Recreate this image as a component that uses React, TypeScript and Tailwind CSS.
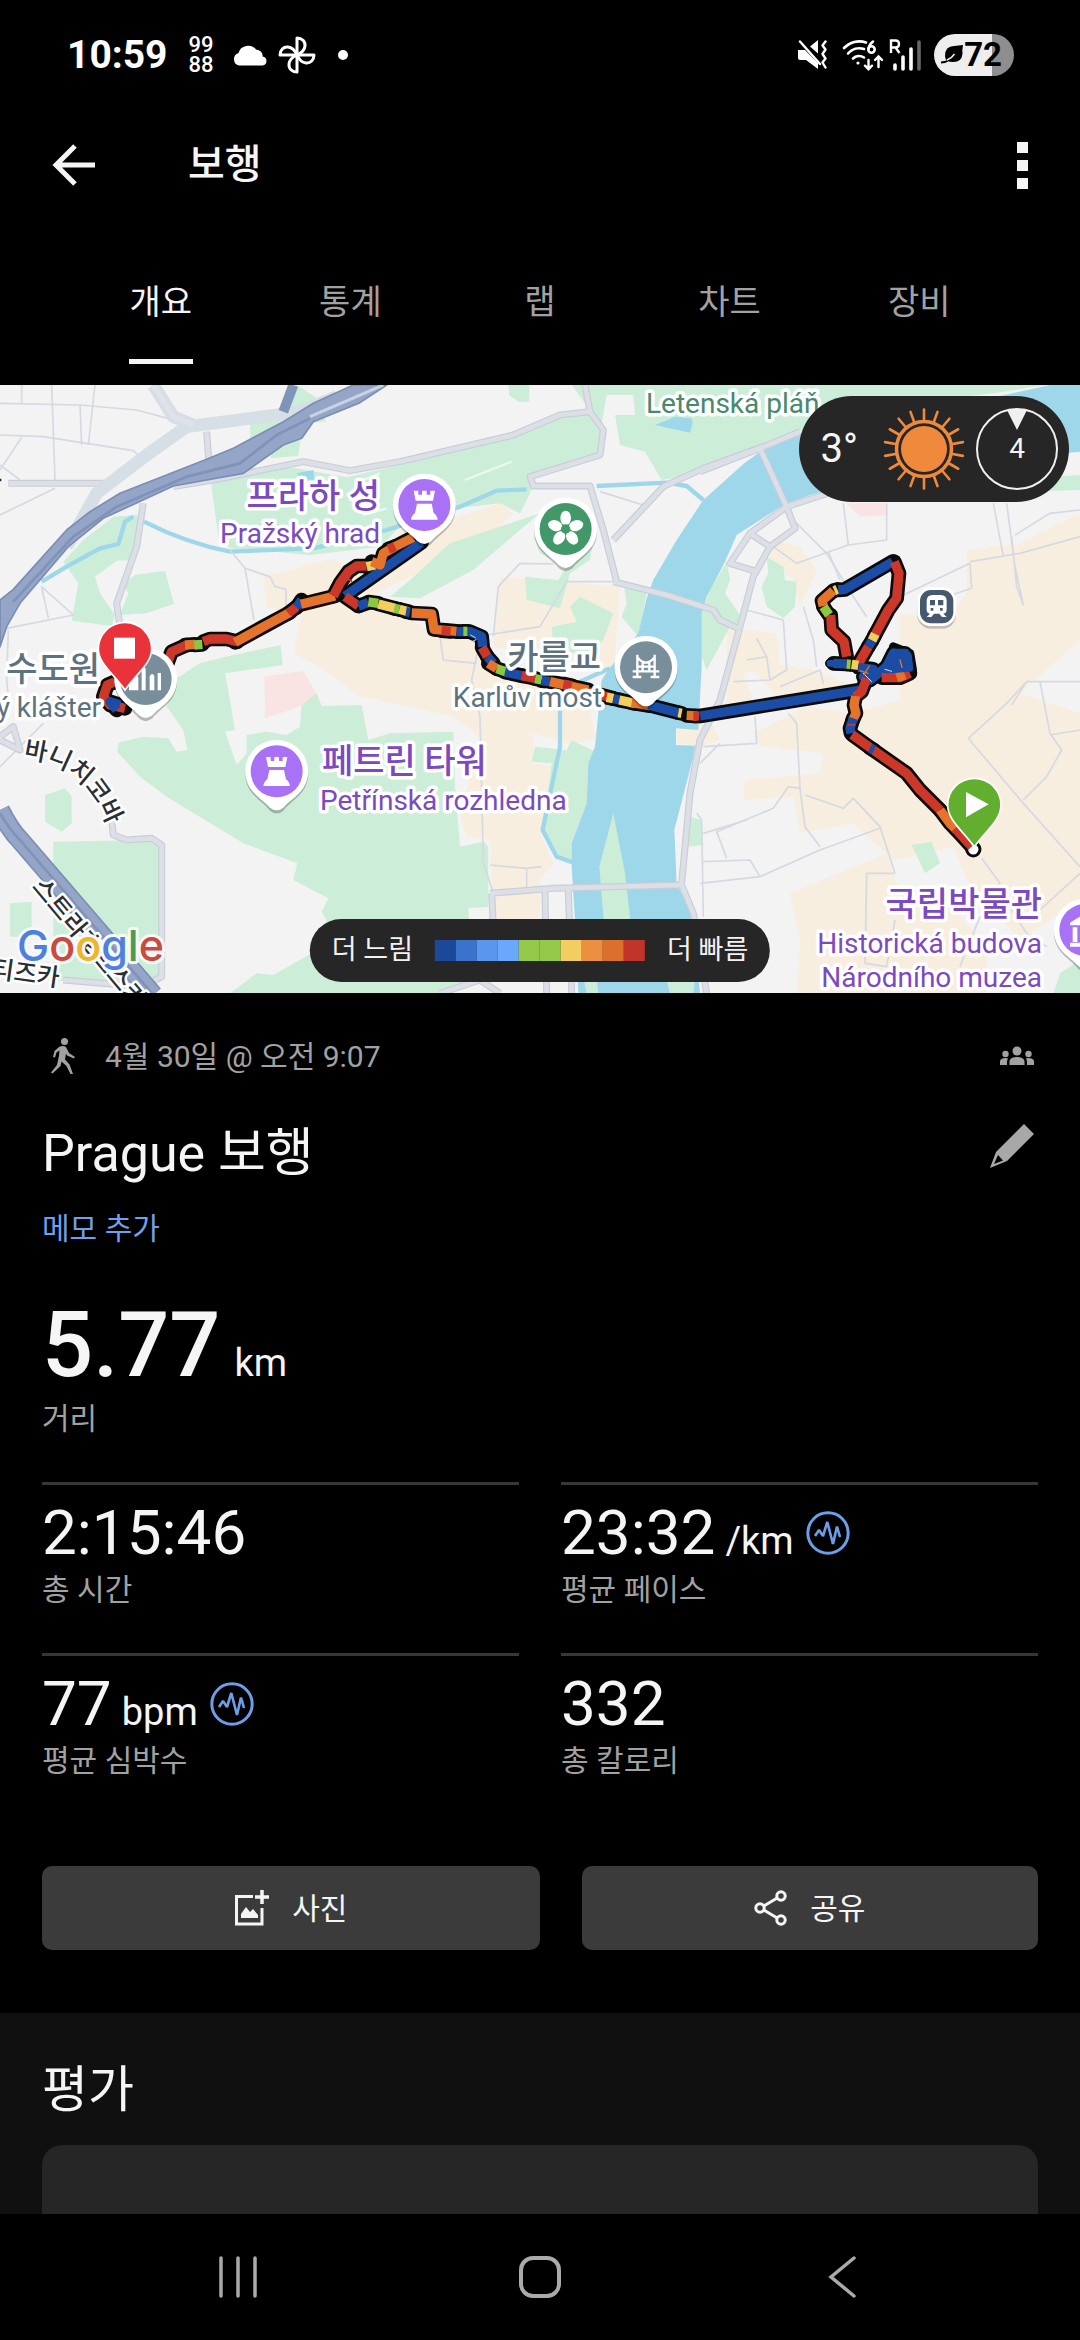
import type { ReactNode } from "react";

const TABS = ["개요", "통계", "랩", "차트", "장비"];

const PACE_COLORS = [
  "bg-[#1b4899]",
  "bg-[#3a73cc]",
  "bg-[#5997ef]",
  "bg-[#6ba7fa]",
  "bg-[#93c848]",
  "bg-[#93c848]",
  "bg-[#f2ce62]",
  "bg-[#ec8f40]",
  "bg-[#dd6f2c]",
  "bg-[#c0342a]",
];

const STATS = [
  { value: "2:15:46", unit: "", label: "총 시간", pulse: false },
  { value: "23:32", unit: "/km", label: "평균 페이스", pulse: true },
  { value: "77", unit: "bpm", label: "평균 심박수", pulse: true },
  { value: "332", unit: "", label: "총 칼로리", pulse: false },
];

const RAYS = Array.from({ length: 18 }, (_, i) => i * 20);

/* ---------- map geometry, in terrain units (3 per pixel) ---------- */

const PARKS = [
  "340,410 410,405 425,430 400,540 350,542 285,590 300,640 345,705 335,738 215,722 235,610 190,545 250,480",
  "405,585 495,572 522,672 440,700 360,705 385,640 370,610",
  "750,130 860,120 905,150 895,228 812,235 820,185 752,185",
  "890,15 945,50 978,125 900,130 870,90",
  "632,300 870,262 1040,292 1200,255 1520,170 1680,105 1770,95 1805,150 1795,235 1580,290 1595,330 1560,400 1500,370 1370,385 1200,440 1140,500 930,525 820,515 690,505 655,470",
  "1525,15 1588,15 1588,65 1555,65 1527,45",
  "1715,15 1770,90 1805,130 1820,45 1900,45 1905,105 1845,105 1860,195 1935,215 1985,300 2035,293 2220,225 2400,155 2800,60 2980,40 3140,15",
  "1170,650 1230,600 1350,490 1620,400 1560,450 1420,570 1260,655",
  "1575,590 1675,600 1700,560 1660,540 1620,520 1600,470 1780,480 1770,540 1710,580 1680,685 1580,660",
  "1710,680 1740,650 1840,700 1810,780 1760,830 1660,800 1655,740 1730,725",
  "1870,600 1940,640 1915,770 1865,710 1880,670",
  "2105,700 2130,630 2180,545 2190,600 2175,640 2230,720 2190,740 2120,870 2105,830",
  "2300,530 2350,560 2355,600 2390,605 2385,680 2350,715 2300,680 2285,620 2305,580",
  "530,895 600,850 700,825 842,795 848,855 675,880 690,960 705,1050 675,1055 710,1155 740,1120 740,1065 800,1055 860,1065 900,1040 905,970 950,940 965,978 1085,975 1105,1080 1170,1060 1360,1055 1365,1220 1380,1400 1450,1385 1465,1400 1465,1580 1405,1585 1420,1805 1320,1840 690,1840 770,1780 820,1785 935,1720 980,1620 965,1595 985,1555 880,1500 892,1450 730,1390 500,1250 420,1190 352,1115 355,1088 430,1070 505,1075 530,1115 562,1110 550,1050 500,980",
  "135,1245 195,1225 215,1250 215,1330 185,1355 135,1325",
  "160,1385 440,1380 490,1400 490,1790 430,1825 160,1800",
  "30,1570 95,1565 95,1670 30,1670",
  "1605,1100 1700,1110 1715,1080 1785,1115 1765,1150 1760,1270 1715,1390 1715,1450 1670,1430 1625,1360 1640,1280 1655,1150 1595,1145",
  "2070,1310 2105,1320 2110,1395 2065,1400",
  "2735,1395 2795,1385 2820,1450 2775,1480",
  "3180,1780 3240,1740 3240,1840 3160,1840",
  "2990,300 3240,285 3240,330 3060,335",
];

const BLOCKS = [
  "790,590 1000,535 1100,600 1010,650 860,700 800,680",
  "910,680 1040,660 1200,700 1300,760 1420,770 1490,870 1760,950 1790,1080 1700,1090 1600,1060 1440,1070 1360,1010 1270,990 1080,950 960,860 880,820",
  "1200,450 1370,410 1500,370 1540,400 1500,440 1320,560 1230,590 1110,650 1070,630",
  "1500,590 1700,605 1860,620 1840,900 1780,880 1660,840 1480,800",
  "1460,1000 1600,1070 1600,1150 1660,1160 1620,1360 1660,1450 1620,1500 1620,1620 1480,1620 1470,1380 1400,1370 1380,1310",
  "2030,980 2110,990 2160,1080 2100,1100 2030,1090",
  "2320,480 2400,500 2450,570 2400,680 2380,600 2310,540",
  "2900,510 3060,490 3240,400 3240,780 3060,940 3240,1000 3240,1560 3060,1680 2900,1500 2860,1400 2680,1440 2560,1330 2400,1360 2380,1250 2230,1260 2235,1200 2460,1180 2470,1120 2280,1100 2260,1060 2420,980 2560,1000 2700,960 2700,700 2840,720 2900,640",
  "2180,740 2330,760 2340,860 2230,880 2260,960 2180,970",
  "2230,840 2450,870 2560,920 2340,960",
  "2370,1540 2660,1420 2700,1540 2840,1560 2960,1700 2960,1840 2390,1840 2400,1680",
];

const STREETS = [
  "0,70 240,75 410,90 540,125",
  "155,15 165,300",
  "65,15 65,70",
  "240,75 245,195",
  "285,15 265,195",
  "0,165 130,170 400,212 420,230",
  "65,172 0,270",
  "165,325 0,405",
  "0,255 60,300",
  "20,745 220,705 125,620 145,715",
  "25,750 20,900 25,950",
  "130,1030 0,1160",
  "690,510 735,565 810,590 825,620 858,628 858,680",
  "735,565 762,720",
  "1480,770 1495,620 1560,550 1660,552",
  "1460,765 1620,740 1700,605 1840,605",
  "1440,780 1415,900 1440,1010 1450,1450 1480,1540",
  "1320,770 1330,840 1430,850",
  "1800,335 1930,375",
  "1470,1455 1580,1465 1625,1460",
  "1580,1465 1580,1530",
  "2530,370 2545,495 2660,480 2660,370",
  "2545,495 2390,550 2320,500",
  "2390,430 2480,520 2560,650 2600,710",
  "2485,515 2520,600",
  "2700,650 2910,550 2915,625 2810,660",
  "2910,545 3060,520 3240,470",
  "2980,370 3010,530",
  "3020,370 3045,560 3070,675 3050,620 3035,470",
  "3045,465 3150,400 3240,390",
  "2240,690 2350,720 2360,870 2310,900",
  "2240,840 2300,830 2310,900 2200,905",
  "2270,775 2300,830",
  "2340,920 2460,870 2470,910",
  "2410,680 2440,780 2450,860",
  "3035,975 3080,905 3020,970 2905,1075 3070,1270 3240,1460",
  "3080,905 3240,905",
  "3120,905 3150,1060 3185,1110 3140,1190 3070,1260",
  "3150,1065 3240,1050",
  "2365,1000 2390,1030 2400,1225 2415,1340 2460,1400",
  "2400,1225 2365,1220 2320,1285 2150,1355 2180,1435",
  "2415,1245 2530,1285 2560,1255 2640,1340 2685,1480",
  "2640,1345 2460,1410 2280,1490 2250,1440 2110,1445",
  "2100,1510 2280,1490",
  "2685,1480 2600,1480 2595,1750 2660,1760 2685,1620",
  "2945,1435 3000,1510 2990,1520 3080,1660 3140,1700",
  "2940,1610 2880,1760",
  "3120,1590 3240,1480",
  "2090,1300 2105,1320 2110,1610",
  "2110,1360 2240,1320",
  "2110,1100 2270,1090 2265,1010",
  "2100,1150 2160,1090",
];

const ROADS = [
  "25,310 310,310",
  "430,370 410,500 350,670 360,740",
  "620,155 630,290",
  "520,320 640,300 910,245 1050,272 1200,245 1540,165 1680,105 1770,95",
  "1755,15 1770,95 1810,150 1800,225 1590,290 1600,318 1770,318 1810,450 1850,605",
  "1840,480 1990,320 2110,265 2290,200",
  "1840,605 2000,645 2140,690 2160,720 2215,745",
  "2280,205 2360,380 2385,445 2310,500 2260,590 2220,740 2160,960 2100,1080 2070,1240 2045,1510",
  "2560,315 2360,380 2250,460 2190,550 2270,575",
  "2250,460 2310,500",
  "2400,155 2280,205 2100,275",
  "335,1320 340,1365 380,1380 455,1375 485,1395 485,1790 430,1820 190,1800",
  "1470,1540 1660,1525 2045,1515 2080,1600 2120,1840",
  "1475,1540 1480,1640",
  "1635,1530 1640,1840",
  "1705,1530 1715,1840",
  "1320,1840 1440,1800 1500,1840",
  "0,1070 40,1040 60,1110 0,1080",
];

type Segment = { d: string; color: string };

const BLUE = "#1b4da6";
const RED = "#cb382a";
const ORANGE = "#e5732b";
const YELLOW = "#f2cf5c";
const GREEN = "#8dc63f";

const SEGMENTS: Segment[] = [
  { d: "375,985 330,975 310,950 322,915 345,905", color: RED },
  { d: "350,990 330,965 360,975", color: BLUE },
  { d: "500,855 515,815 560,795", color: RED },
  { d: "555,795 585,793", color: ORANGE },
  { d: "583,795 607,793", color: GREEN },
  { d: "610,785 630,777 680,777 712,785", color: RED },
  { d: "705,787 800,735 870,697", color: ORANGE },
  { d: "865,700 890,680", color: RED },
  { d: "890,682 905,660", color: BLUE },
  { d: "903,673 1005,648", color: ORANGE },
  { d: "1000,648 1020,610 1045,575 1070,558 1100,558", color: RED },
  { d: "1265,487 1035,648", color: BLUE },
  { d: "1100,560 1125,555", color: YELLOW },
  { d: "1115,545 1140,555 1150,520 1185,500", color: ORANGE },
  { d: "1165,507 1185,500", color: RED },
  { d: "1185,500 1240,472", color: ORANGE },
  { d: "1035,650 1075,678", color: RED },
  { d: "1075,678 1105,668", color: BLUE },
  { d: "1105,666 1135,670", color: GREEN },
  { d: "1135,672 1185,685", color: YELLOW },
  { d: "1183,685 1198,688", color: GREEN },
  { d: "1198,688 1225,695", color: YELLOW },
  { d: "1218,695 1230,697", color: BLUE },
  { d: "1235,699 1295,702 1302,748 1370,754", color: ORANGE },
  { d: "1325,752 1352,754", color: RED },
  { d: "1370,755 1410,755 1445,770 1448,800", color: BLUE },
  { d: "1390,754 1402,754", color: GREEN },
  { d: "1446,802 1462,830", color: RED },
  { d: "1462,830 1480,850", color: BLUE },
  { d: "1465,850 1490,866", color: ORANGE },
  { d: "1490,866 1520,876", color: GREEN },
  { d: "1515,876 1570,888", color: BLUE },
  { d: "1565,887 1605,895", color: RED },
  { d: "1605,896 1625,900", color: GREEN },
  { d: "1625,902 1650,905", color: BLUE },
  { d: "1650,905 1765,930", color: ORANGE },
  { d: "1690,912 1715,917", color: RED },
  { d: "1765,935 1840,955", color: RED },
  { d: "1820,952 1840,956", color: YELLOW },
  { d: "1840,956 1860,960", color: BLUE },
  { d: "1858,960 1905,970", color: YELLOW },
  { d: "1895,968 1950,977", color: ORANGE },
  { d: "1945,975 2035,998", color: BLUE },
  { d: "2035,998 2045,1000", color: YELLOW },
  { d: "2060,1006 2090,1008", color: ORANGE },
  { d: "2080,1008 2098,1008", color: RED },
  { d: "2100,1008 2580,930", color: BLUE },
  { d: "2540,830 2532,785 2495,750 2492,705", color: RED },
  { d: "2487,705 2470,680", color: GREEN },
  { d: "2470,678 2466,662 2500,632", color: ORANGE },
  { d: "2503,632 2512,628", color: YELLOW },
  { d: "2515,630 2535,628 2678,545", color: BLUE },
  { d: "2683,545 2697,580 2690,655 2665,690 2622,770", color: RED },
  { d: "2626,762 2616,782", color: YELLOW },
  { d: "2616,782 2605,800", color: BLUE },
  { d: "2605,800 2575,852", color: RED },
  { d: "2500,850 2540,852", color: BLUE },
  { d: "2540,852 2552,853", color: GREEN },
  { d: "2555,853 2575,856", color: YELLOW },
  { d: "2575,862 2620,868 2590,890 2610,900 2660,860", color: BLUE },
  { d: "2655,870 2680,820 2715,820 2720,860 2680,850 2660,880 2710,870", color: BLUE },
  { d: "2645,893 2700,893 2730,880", color: RED },
  { d: "2690,893 2715,885", color: ORANGE },
  { d: "2600,895 2585,935 2565,950", color: RED },
  { d: "2567,948 2562,975 2568,1000 2558,1020", color: ORANGE },
  { d: "2560,1015 2550,1045 2553,1060", color: BLUE },
  { d: "2556,1064 2620,1110 2720,1180 2760,1230 2820,1290", color: RED },
  { d: "2610,1104 2622,1110", color: BLUE },
  { d: "2820,1290 2850,1330 2870,1350", color: ORANGE },
  { d: "2865,1345 2915,1400", color: RED },
];

/* ---------- small building blocks ---------- */

function IconButton({ label, className = "", children }: { label: string; className?: string; children: ReactNode }) {
  return (
    <button type="button" aria-label={label} className={`flex items-center justify-center ${className}`}>
      {children}
    </button>
  );
}

function PulseIcon() {
  return (
    <svg viewBox="0 0 44 44" className="h-11 w-11" fill="none" stroke="#6c9fe8" aria-hidden="true">
      <circle cx="22" cy="22" r="20.2" strokeWidth="3" />
      <path d="M9 25l4-6 4 6 4.3-14L27 33l4-17.5L34 26" strokeWidth="2.6" strokeLinejoin="bevel" />
    </svg>
  );
}

function PoiPin({ x, y, color, children }: { x: number; y: number; color: string; children?: ReactNode }) {
  return (
    <g transform={`translate(${x} ${y})`}>
      <path
        d="M0 -94A94 94 0 0 1 80 50C62 76 38 88 20 111Q0 128 -20 111C-38 88 -62 76 -80 50A94 94 0 0 1 0 -94Z"
        fill="#000"
        opacity="0.25"
        transform="translate(0 7)"
      />
      <path
        d="M0 -94A94 94 0 0 1 80 50C62 76 38 88 20 109Q0 125 -20 109C-38 88 -62 76 -80 50A94 94 0 0 1 0 -94Z"
        fill="#fff"
      />
      <circle r="78" fill={color} />
      {children}
    </g>
  );
}

function Tower() {
  return (
    <path
      d="M-32 -43h14v12h11v-12h14v12h11v-12h14l-6 30h-52zM-22 -4h44l6 28q10 6 12 20h-80q2 -14 12 -20z"
      fill="#fff"
    />
  );
}

function Label({ x, y, color, small, end, children }: {
  x: number;
  y: number;
  color: string;
  small?: boolean;
  end?: boolean;
  children: ReactNode;
}) {
  return (
    <text
      x={x}
      y={y}
      fill={color}
      stroke="#fff"
      strokeWidth="7"
      strokeLinejoin="round"
      paintOrder="stroke"
      textAnchor={end ? "end" : "start"}
      className={small ? "text-[28px]" : "text-[34px] font-medium"}
    >
      {children}
    </text>
  );
}

/* ---------- status bar ---------- */

function StatusBar() {
  return (
    <div className="flex h-[110px] items-center justify-between pr-[66px] pl-[67px] text-white">
      <div className="flex items-center">
        <span className="text-[39px] font-bold">10:59</span>
        <div className="ml-[21px] flex flex-col text-[22px] leading-[20px] font-medium">
          <span>99</span>
          <span>88</span>
        </div>
        <svg viewBox="0 0 36 22" className="ml-[18px] h-[22px] w-9" fill="#fff" aria-hidden="true">
          <path d="M7 21.500a6.500 6.500 0 0 1-.5-12.500A10 9.500 0 0 1 24 5.500a7 6 0 0 1 6.500 7A5 4.600 0 0 1 30.500 21.500z" />
        </svg>
        <svg viewBox="0 0 40 40" className="ml-[9px] h-10 w-10" fill="none" stroke="#fff" strokeWidth="3" strokeLinejoin="round" aria-hidden="true">
          {[0, 90, 180, 270].map((a) => (
            <path key={a} transform={`rotate(${a} 20 20)`} d="M20 20V3c5 0 8.500 3.500 8 8-.4 4-3.500 7-8 9z" />
          ))}
        </svg>
        <span className="ml-[21px] h-[10px] w-[10px] rounded-full bg-white" />
      </div>

      <div className="flex items-center">
        <svg viewBox="0 0 30 30" className="h-[30px] w-[30px]" fill="#fff" aria-hidden="true">
          <path d="M0 10h7l13 13v6L8 20H2q-2 0-2-2z" />
          <path d="M12 6.500L20 0v13.500z" />
          <path d="M2 1.500L22 24" stroke="#fff" strokeWidth="2.400" strokeLinecap="round" />
          <path d="M27.500 1.500l-3 4 3 4-3 4.500 3 4.500-3 4 3 5" fill="none" stroke="#fff" strokeWidth="2.400" strokeLinecap="round" strokeLinejoin="round" />
        </svg>
        <svg viewBox="0 0 42 32" className="ml-[14px] h-8 w-[42px]" fill="none" stroke="#fff" strokeWidth="2.600" strokeLinecap="round" aria-hidden="true">
          <path d="M2 9A21 21 0 0 1 24 3.500M6 14.500A15 15 0 0 1 22 10M11 19.500A9 9 0 0 1 22 18.500" />
          <circle cx="16" cy="24" r="1.600" fill="#fff" stroke="none" />
          <path d="M31 2.500q-4 3-4.400 7" />
          <circle cx="29.500" cy="10.500" r="3.200" />
          <path d="M26.500 21v9m-3.500-3.300l3.500 3.500 3.500-3.500M36.500 28V18m-3.500 3l3.500-3.500 3.500 3.500" strokeWidth="2.400" />
        </svg>
        <svg viewBox="0 0 32 32" className="ml-[5px] h-8 w-8" aria-hidden="true">
          <path d="M2 14V1.500h4.500q3.500 0 3.500 3.500t-3.500 3.500H2m4.500 0L10.500 14" fill="none" stroke="#fff" strokeWidth="2.400" />
          <path d="M6 26v4M14 18v12M22 10v20" stroke="#fff" strokeWidth="3.600" strokeLinecap="round" />
          <path d="M30 3v27" stroke="#666" strokeWidth="3.600" strokeLinecap="round" />
        </svg>
        <div className="ml-[13px] flex h-[42px] items-center rounded-full bg-linear-to-r from-[#eeeeee] from-72% to-[#8e8e8e] to-72% pr-3 pl-[6px] text-black">
          <svg viewBox="0 0 24 22" className="h-[22px] w-6" aria-hidden="true">
            <path d="M23 1Q22 6 22.500 10q-1 8-9 8Q5 18 5 12 5 2 14 2z" />
            <path d="M1 18.500q8 0 13-8" fill="none" stroke="#000" strokeWidth="2" />
            <path d="M7 16q5-2 7.500-6" fill="none" stroke="#eee" strokeWidth="1.500" />
          </svg>
          <span className="text-[33px] font-bold">72</span>
        </div>
      </div>
    </div>
  );
}

/* ---------- map ---------- */

function Terrain() {
  return (
    <g transform="scale(0.33333) translate(0 -15)" strokeLinejoin="round" fill="none">
      <rect y="15" width="3240" height="1830" fill="#f3f3f4" />
      {BLOCKS.map((p) => (
        <polygon key={p} points={p} fill="#f8eedf" />
      ))}
      {PARKS.map((p) => (
        <polygon key={p} points={p} fill="#cceed8" />
      ))}
      <polygon points="793,890 910,872 948,940 905,978 795,1015" fill="#fae3e3" />
      <polygon points="2540,370 2660,370 2665,405 2580,410" fill="#fae3e3" />
      <polygon points="1070,900 1190,890 1190,955 1075,950" fill="#f8eedf" />

      {/* Vltava */}
      <polygon
        points="3150,15 3000,48 2400,165 2280,215 2230,252 2110,360 2030,480 1960,600 1940,655 1915,760 1825,870 1805,900 1785,1100 1765,1150 1760,1270 1715,1390 1715,1460 1725,1620 1735,1840 2100,1840 2080,1615 2030,1510 2023,1350 2080,1130 2085,1097 2028,1095 2028,1045 2095,1050 2105,860 2105,700 2120,650 2175,545 2210,465 2350,375 2430,345 2700,270 3240,215 3240,15"
        fill="#9fd7ea"
      />
      <polygon points="1840,1300 1875,1480 1892,1630 1812,1630 1798,1460" fill="#cceed8" />
      <polygon points="1752,1800 1790,1800 1795,1840 1760,1840" fill="#cceed8" />
      <polygon points="2000,1800 2085,1800 2080,1840 2010,1840" fill="#cceed8" />
      <polygon points="1965,135 2025,110 2075,115 2078,130 2070,158" fill="#9fd7ea" />
      <polygon points="890,280 940,270 945,300 905,298" fill="#9fd7ea" />
      <path d="M125 605L200 560 300 505 355 492 375 425 400 410M432 425Q560 490 690 515L940 505 1160 450 1380 380 1490 332 1580 328M1790 318L2000 308 2060 318 2110 360M1680 990L1680 1100 1628 1350 1670 1430 1720 1448M1740 905L1830 865" stroke="#9fd7ea" strokeWidth="13" />

      {STREETS.map((p) => (
        <polyline key={p} points={p} stroke="#d4d9e2" strokeWidth="5" />
      ))}
      {ROADS.map((p) => (
        <polyline key={p} points={p} stroke="#c9cdd8" strokeWidth="21" />
      ))}
      {ROADS.map((p) => (
        <polyline key={p} points={p} stroke="#dcdfe6" strokeWidth="14" />
      ))}
      <path d="M1090 300L1140 280M1395 300L1535 245M1090 405L1160 385" stroke="#ecf7ef" strokeWidth="7" />

      {/* tunnel road and motorway */}
      <path d="M200 500L290 340 440 225 560 140 730 118 900 95 1010 50M460 15L520 110 580 135" stroke="#d6dee6" strokeWidth="38" />
      <path d="M460 15L520 110 580 135" stroke="#dfe2e8" strokeWidth="16" />
      <path d="M850 95L880 15" stroke="#8094b8" strokeWidth="30" />
      <polygon
        points="0,660 40,628 200,450 270,395 360,340 620,238 700,205 850,125 940,70 1060,15 1160,15 1080,68 940,125 905,175 850,195 730,280 520,318 310,415 205,500 60,670 20,740 0,800"
        fill="#94a5c8"
        stroke="#7a8eb3"
        strokeWidth="5"
      />
      <path d="M40 665L220 470 350 380 560 290 720 250 830 165 930 115" stroke="#7f92b8" strokeWidth="8" />
      <path d="M930 110L1150 15" stroke="#c9d2e2" strokeWidth="9" />
      <path d="M0 1290Q30 1350 60 1380L460 1845" stroke="#7a8eb3" strokeWidth="60" />
      <path d="M0 1290Q30 1350 60 1380L460 1845" stroke="#94a5c8" strokeWidth="50" />
      <path d="M0 1300Q30 1350 60 1380L460 1845" stroke="#7f92b8" strokeWidth="8" />
      <path d="M-10 300h14" stroke="#222" strokeWidth="7" />
    </g>
  );
}

function Route() {
  return (
    <g transform="scale(0.33333) translate(0 -15)" strokeLinejoin="round" strokeLinecap="round" fill="none">
      {SEGMENTS.map((s) => (
        <polyline key={s.d} points={s.d} stroke="#0b0b0b" strokeWidth="44" />
      ))}
      <path d="M2680 800L2730 820 2738 870 2665 875ZM2488 850h25" fill="#0b0b0b" stroke="#0b0b0b" strokeWidth="26" />
      <circle cx="2920" cy="1408" r="20" fill="#fff" stroke="#0b0b0b" strokeWidth="9" />
      {SEGMENTS.map((s) => (
        <polyline key={s.d} points={s.d} stroke={s.color} strokeWidth="28" strokeLinecap="butt" />
      ))}
      <path d="M2680 815L2725 825 2730 865 2665 870ZM2490 850h25" fill="#1b4da6" stroke="#1b4da6" strokeWidth="20" />
      <path d="M2590 880L2615 905M1412 765l14 8m-10 12l12-6M2655 868l20 6" stroke="#cfe0f2" strokeWidth="3" />
      <path d="M2580 872l24 8m4-22l-16 26M2700 840l6 22" stroke="#e5732b" strokeWidth="4" />
      <path d="M1040 595l14 8M2545 1034h18" stroke="#cb382a" strokeWidth="6" />
    </g>
  );
}

function Pins() {
  return (
    <g transform="scale(0.33333) translate(0 -15)">
      <PoiPin x={1273} y={375} color="#a871f6">
        <Tower />
      </PoiPin>
      <PoiPin x={830} y={1174} color="#a871f6">
        <Tower />
      </PoiPin>
      <PoiPin x={1697} y={447} color="#43986a">
        {[0, 72, 144, 216, 288].map((a) => (
          <ellipse key={a} cx="0" cy="-33" rx="16" ry="22" fill="#fff" transform={`rotate(${a})`} />
        ))}
        <circle r="14" fill="#43986a" />
      </PoiPin>
      <PoiPin x={1938} y={862} color="#798e9b">
        <path
          d="M-26 -38V30M26 -38V30M-26 -30Q0 2 26 -30M-10 -14V12M10 -14V12M-40 12H40M-28 -2H28M-40 29H-14M14 29H40"
          fill="none"
          stroke="#fff"
          strokeWidth="7"
        />
      </PoiPin>
      <PoiPin x={437} y={897} color="#798e9b">
        <path d="M-50 34V-4q14 -24 28 0V34M-12 34V-30l6 -10 6 10V34M12 34V-8q8 -14 14 0V34M36 34V-18h10V34z" fill="#fff" />
      </PoiPin>
      <PoiPin x={3256} y={1650} color="#a871f6">
        <path d="M-46 -22L0 -50 46 -22v8h-92zM-38 -8h14v44h-14zM-46 38h92v12h-92z" fill="#fff" />
      </PoiPin>

      {/* metro station */}
      <rect x="2752" y="628" width="116" height="118" rx="40" fill="#000" opacity="0.2" />
      <rect x="2752" y="622" width="116" height="116" rx="40" fill="#fff" />
      <rect x="2760" y="630" width="100" height="100" rx="33" fill="#47596f" />
      <path
        fillRule="evenodd"
        fill="#fff"
        d="M2798 645h24q18 0 18 18v26q0 10 -10 12l10 10h-14l-8 -10h-16l-8 10h-14l10 -10q-10 -2 -10 -12v-26q0 -18 18 -18zM2790 660v16h15v-16zM2814 660v16h16v-16zM2792 684v8h8v-8zM2820 684v8h8v-8z"
      />

      {/* finish */}
      <path d="M375 727A80 80 0 0 1 455 807C455 850 410 880 375 930C340 880 295 850 295 807A80 80 0 0 1 375 727Z" fill="#e93239" stroke="#fff" strokeWidth="5" />
      <rect x="342" y="773" width="63" height="63" fill="#fff" />

      {/* start */}
      <path d="M2923 1195A80 80 0 0 1 3003 1275C3003 1320 2960 1350 2923 1400C2886 1350 2843 1320 2843 1275A80 80 0 0 1 2923 1195Z" fill="#62af2f" stroke="#fff" strokeWidth="5" />
      <path d="M2898 1236L2966 1273 2898 1312Z" fill="#fff" />
    </g>
  );
}

function MapLabels() {
  return (
    <g>
      <Label x={380} y={123} color="#7b4ac2" end>프라하 성</Label>
      <Label x={380} y={158} color="#7b4ac2" small end>Pražský hrad</Label>
      <Label x={646} y={28} color="#48896c" small>Letenská pláň</Label>
      <Label x={100} y={296} color="#5d7280" end>수도원</Label>
      <Label x={101} y={332} color="#5d7280" small end>ý klášter</Label>
      <Label x={601} y={284} color="#5d7280" end>카를교</Label>
      <Label x={602} y={322} color="#5d7280" small end>Karlův most</Label>
      <Label x={322} y={388} color="#7b4ac2">페트린 타워</Label>
      <Label x={320} y={425} color="#7b4ac2" small>Petřínská rozhledna</Label>
      <Label x={1042} y={531} color="#7b4ac2" end>국립박물관</Label>
      <Label x={1042} y={568} color="#7b4ac2" small end>Historická budova</Label>
      <Label x={1042} y={602} color="#7b4ac2" small end>Národního muzea</Label>

      <path id="banicikova" d="M23 373Q84 378 108 442" fill="none" />
      <g fill="#2a2f36" stroke="#fff" strokeWidth="5" strokeLinejoin="round" paintOrder="stroke" className="text-[25px] font-medium">
        <text>
          <textPath href="#banicikova">바니치코바</textPath>
        </text>
        <text transform="translate(31 502) rotate(50)">스트라호프스카</text>
        <text transform="translate(-10 592) rotate(8)">티즈카</text>
      </g>

      <text x="17" y="576" stroke="#f6f8fa" strokeWidth="6" strokeLinejoin="round" paintOrder="stroke" className="font-['Inter',sans-serif] text-[43px] font-medium">
        <tspan fill="#5080df">G</tspan>
        <tspan fill="#cc4a3d">o</tspan>
        <tspan fill="#edb62f">o</tspan>
        <tspan fill="#5080df">g</tspan>
        <tspan fill="#4b9b55">l</tspan>
        <tspan fill="#cc4a3d">e</tspan>
      </text>
    </g>
  );
}

function Weather() {
  return (
    <div className="absolute top-[11px] right-[11px] flex h-[106px] items-center gap-[11px] rounded-full bg-[#262626] pr-[11px] pl-[22px]">
      <span className="mr-[14px] text-[40px] text-[#f5f5f5]">3°</span>
      <svg viewBox="-41 -41 82 82" className="h-[82px] w-[82px]" stroke="#ef8a3c" role="img" aria-label="맑음">
        <circle r="23" fill="#ef8a3c" stroke="none" />
        <circle r="27.500" fill="none" strokeWidth="3.500" />
        {RAYS.map((a) => (
          <path key={a} d="M0 -29V-39.500" strokeWidth="2.600" strokeLinecap="round" transform={`rotate(${a})`} />
        ))}
      </svg>
      <div className="relative flex h-[82px] w-[82px] items-center justify-center rounded-full border-2 border-[#f0f0f0] text-[28px] text-[#f5f5f5]">
        4
        <span className="absolute top-0 h-5 w-5 bg-[#f0f0f0] [clip-path:polygon(0_0,100%_0,50%_100%)]" />
      </div>
    </div>
  );
}

function PaceLegend() {
  return (
    <div className="absolute bottom-[11px] left-1/2 flex h-[63px] -translate-x-1/2 items-center gap-[22px] rounded-full bg-[#262626] px-[22px] text-[27px] whitespace-nowrap text-[#f2f2f2]">
      <span>더 느림</span>
      <div className="flex">
        {PACE_COLORS.map((c, i) => (
          <span key={i} className={`h-[21px] w-[21px] ${c}`} />
        ))}
      </div>
      <span>더 빠름</span>
    </div>
  );
}

function RouteMap() {
  return (
    <div className="relative h-[608px] overflow-hidden bg-[#f3f3f4]">
      <svg viewBox="0 0 1080 608" preserveAspectRatio="xMidYMid slice" className="h-full w-full">
        <Terrain />
        <Route />
        <MapLabels />
        <Pins />
      </svg>
      <Weather />
      <PaceLegend />
    </div>
  );
}

/* ---------- activity details ---------- */

function Summary() {
  return (
    <section className="px-[42px]">
      <div className="flex h-[126px] items-center text-[30px] text-[#a2a2a2]">
        <svg viewBox="0 0 24 36" className="mr-[30px] ml-[9px] h-9 w-6" fill="#a2a2a2" aria-hidden="true">
          <circle cx="13.500" cy="3.500" r="3.500" />
          <path d="M8 9q4-2 7 0l3 6 6 4-1 1.500-7-3-1-2-1 6 4.500 5L22 36h-2.500L15.500 28 10.500 23.500 9.500 28 1.500 35.500 0 34.500 6 27l2-9.500.5-5L5.500 14.500 4 19.500l-2-.5L3.500 13z" />
        </svg>
        <span>4월 30일 @ 오전 9:07</span>
        <svg viewBox="0 0 34 20" className="mr-1 ml-auto h-5 w-[34px]" fill="#a2a2a2" aria-hidden="true">
          <circle cx="17" cy="5" r="4.500" />
          <circle cx="5.500" cy="8" r="3.200" />
          <circle cx="28.500" cy="8" r="3.200" />
          <path d="M9.500 19v-4q1-4 7.500-4t7.500 4v4zM0 19v-4q1-3 5.500-3 1.500 0 2.700.6-1.200 1.400-1.200 3.400v3zM34 19v-4q-1-3-5.500-3-1.500 0-2.700.6 1.200 1.400 1.200 3.400v3z" />
        </svg>
      </div>

      <div className="flex h-[70px] items-center justify-between">
        <h2 className="text-[52px] leading-[70px] text-[#f5f5f5]">Prague 보행</h2>
        <IconButton label="이름 수정" className="mr-1">
          <svg viewBox="0 0 44 44" className="mb-4 h-11 w-11" fill="#a8a8a8" fillRule="evenodd" aria-hidden="true">
            <path d="M34 0L44 10 17 37 0 44 6 28ZM8 31L4 40 13 36.500Z" />
          </svg>
        </IconButton>
      </div>

      <button type="button" className="mt-5 block text-[30px] leading-10 text-[#6f9fee]">
        메모 추가
      </button>

      <div className="mt-[47px] flex h-[103px] items-baseline gap-[14px] leading-[100px] text-[#f5f5f5]">
        <span className="text-[90px] font-medium">5.77</span>
        <span className="text-[38px] leading-none">km</span>
      </div>
      <p className="text-[30px] leading-10 text-[#a2a2a2]">거리</p>

      <dl className="mt-[43px] grid grid-cols-2 gap-x-[42px]">
        {STATS.map((s) => (
          <div key={s.label} className="flex h-[171px] flex-col-reverse justify-end border-t-3 border-[#373737]">
            <dt className="text-[30px] leading-10 text-[#a2a2a2]">{s.label}</dt>
            <dd className="mt-[11px] flex h-[74px] items-center gap-3 text-[#f5f5f5]">
              <span className="flex items-baseline gap-[10px] text-[62px] leading-[74px]">
                {s.value}
                {s.unit && <span className="text-[38px] leading-none">{s.unit}</span>}
              </span>
              {s.pulse && <PulseIcon />}
            </dd>
          </div>
        ))}
      </dl>

      <div className="mt-[42px] grid grid-cols-[12fr_11fr] gap-[42px] pb-[63px] text-[30px] text-[#f5f5f5]">
        <button type="button" className="flex h-[84px] items-center justify-center gap-[22px] rounded-[10px] bg-[#3b3b3b]">
          <svg viewBox="0 0 36 36" className="h-9 w-9" aria-hidden="true">
            <path d="M19 6.500H2.500V34H28V18" fill="none" stroke="#f5f5f5" strokeWidth="3" />
            <path d="M28 0v14M21 7h14" stroke="#f5f5f5" strokeWidth="3.500" />
            <path d="M7 28V24l5-7 4 5 3-3 5 6v3z" fill="#f5f5f5" />
          </svg>
          사진
        </button>
        <button type="button" className="flex h-[84px] items-center justify-center gap-[22px] rounded-[10px] bg-[#3b3b3b]">
          <svg viewBox="0 0 34 36" className="h-9 w-[34px]" fill="none" stroke="#f5f5f5" strokeWidth="3" aria-hidden="true">
            <circle cx="27" cy="6" r="4.200" />
            <circle cx="6" cy="18" r="4.200" />
            <circle cx="27" cy="30" r="4.200" />
            <path d="M9.800 16L23.200 8M9.800 20L23.200 28" />
          </svg>
          공유
        </button>
      </div>
    </section>
  );
}

function SystemNav() {
  return (
    <nav className="flex h-[126px] justify-center px-[87px]">
      <IconButton label="최근 앱" className="flex-1">
        <svg viewBox="0 0 40 42" className="h-[42px] w-10" stroke="#aaa" strokeWidth="3.500" strokeLinecap="round" aria-hidden="true">
          <path d="M3 2v38M20 2v38M37 2v38" />
        </svg>
      </IconButton>
      <IconButton label="홈" className="flex-1">
        <span className="h-[42px] w-[42px] rounded-[14px] border-4 border-[#aaa]" />
      </IconButton>
      <IconButton label="뒤로" className="flex-1">
        <svg viewBox="0 0 28 42" className="h-[42px] w-7" fill="none" stroke="#aaa" strokeWidth="3.500" strokeLinecap="round" aria-hidden="true">
          <path d="M26 2L3 21 26 40" />
        </svg>
      </IconButton>
    </nav>
  );
}

export default function App() {
  return (
    <div lang="ko" className="flex min-h-screen flex-col bg-black font-['Roboto','Noto_Sans_CJK_KR',sans-serif]">
      <StatusBar />

      <header className="flex h-[110px] items-center px-[52px] text-[#f5f5f5]">
        <IconButton label="뒤로">
          <svg viewBox="0 0 43 42" className="h-[42px] w-[43px]" fill="none" stroke="#f5f5f5" strokeWidth="5" aria-hidden="true">
            <path d="M43 21H4M23 2L4 21 23 40" />
          </svg>
        </IconButton>
        <h1 className="ml-[93px] text-[40px] font-medium">보행</h1>
        <IconButton label="메뉴" className="ml-auto flex-col gap-[7px]">
          <span className="h-[11px] w-[11px] bg-[#f5f5f5]" />
          <span className="h-[11px] w-[11px] bg-[#f5f5f5]" />
          <span className="h-[11px] w-[11px] bg-[#f5f5f5]" />
        </IconButton>
      </header>

      <div role="tablist" className="flex h-[165px] px-[66px]">
        {TABS.map((t, i) => (
          <button
            key={t}
            type="button"
            role="tab"
            aria-selected={i === 0}
            className={`relative flex-1 text-[34px] ${i === 0 ? "text-[#f5f5f5]" : "text-[#a2a2a2]"}`}
          >
            {t}
            {i === 0 && <span className="absolute bottom-[21px] left-1/2 h-[5px] w-16 -translate-x-1/2 bg-[#f5f5f5]" />}
          </button>
        ))}
      </div>

      <RouteMap />
      <Summary />

      <section className="flex flex-1 flex-col bg-[#101010] px-[42px] pt-11">
        <h2 className="text-[50px] leading-[66px] text-[#f5f5f5]">평가</h2>
        <div className="mt-[22px] min-h-[69px] flex-1 rounded-t-[20px] bg-[#262626]" />
      </section>

      <SystemNav />
    </div>
  );
}
